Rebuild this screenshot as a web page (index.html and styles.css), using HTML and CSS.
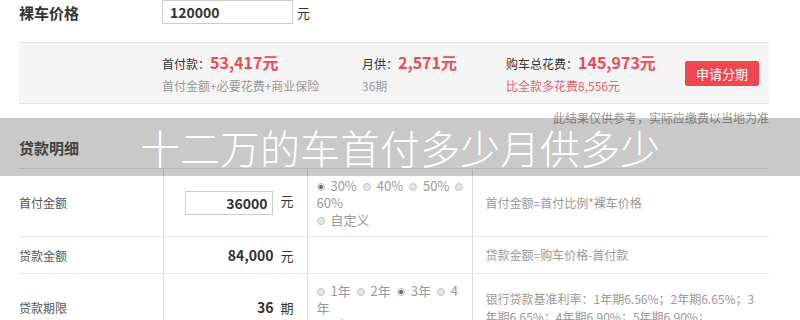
FILE: index.html
```html
<!DOCTYPE html>
<html>
    <head>
        <meta charset="utf-8" />
        <meta name="viewport" content="width=device-width, initial-scale=1" />
        <title>十二万的车首付多少月供多少</title>
        <link rel="stylesheet" href="styles.css">
    </head>
    <body>
        <div class="calc">
            <div class="price-row">
                <span class="price-label">裸车价格</span>
                <input class="price-input" type="text" value="120000" />
                <span class="unit">元</span>
            </div>

            <div class="summary">
                <div class="sum-item sum-item--down">
                    <p class="sum-main">首付款：<b>53,417元</b></p>
                    <p class="sum-sub">首付金额+必要花费+商业保险</p>
                </div>
                <div class="sum-item sum-item--month">
                    <p class="sum-main">月供：<b>2,571元</b></p>
                    <p class="sum-sub">36期</p>
                </div>
                <div class="sum-item sum-item--total">
                    <p class="sum-main">购车总花费：<b>145,973元</b></p>
                    <p class="sum-sub sum-sub--red">比全款多花费8,556元</p>
                </div>
                <a class="apply-btn" href="#">申请分期</a>
            </div>

            <p class="note">此结果仅供参考，实际应缴费以当地为准</p>

            <h3 class="detail-title">贷款明细</h3>
            <table class="detail">
                <tr class="row-down">
                    <td class="c-label">首付金额</td>
                    <td class="c-value"><input class="value-input" type="text" value="36000" /><span class="unit">元</span></td>
                    <td class="c-opts">
                        <label class="opt"><i class="radio radio--on"></i> 30%</label><label class="opt"><i class="radio"></i> 40%</label><label class="opt"><i class="radio"></i> 50%</label><label class="opt"><i class="radio"></i> 60%</label><br>
                        <label class="opt"><i class="radio"></i> 自定义</label>
                    </td>
                    <td class="c-desc">首付金额=首付比例*裸车价格</td>
                </tr>
                <tr class="row-loan">
                    <td class="c-label">贷款金额</td>
                    <td class="c-value"><b>84,000</b><span class="unit">元</span></td>
                    <td class="c-opts"></td>
                    <td class="c-desc">贷款金额=购车价格-首付款</td>
                </tr>
                <tr class="row-term">
                    <td class="c-label">贷款期限</td>
                    <td class="c-value"><b>36</b><span class="unit">期</span></td>
                    <td class="c-opts">
                        <label class="opt"><i class="radio"></i> 1年</label><label class="opt"><i class="radio"></i> 2年</label><label class="opt"><i class="radio radio--on"></i> 3年</label><label class="opt"><i class="radio"></i> 4年</label><br>
                        <label class="opt"><i class="radio"></i> 5年</label>
                    </td>
                    <td class="c-desc">银行贷款基准利率：1年期6.56%；2年期6.65%；3年期6.65%；4年期6.90%；5年期6.90%；</td>
                </tr>
            </table>
        </div>

        <div class="banner">十二万的车首付多少月供多少</div>
    </body>
</html>
```

FILE: styles.css
```css
*,*::before,*::after{
    box-sizing: border-box;
}
body{
    margin:0;
    padding:0;
    position: relative;
    font-family: "Noto Sans CJK SC", "Noto Sans", sans-serif;
    font-size:12px;
    color:#333;
    background:#fff;
    overflow:hidden;
    height:320px;
}
p{
    margin:0;
}
.calc{
    width:750px;
    margin-left:19px;
}

/* price */
.price-row{
    display:flex;
    align-items:center;
    height:24px;
}
.price-label{
    width:143px;
    font-size:15px;
    font-weight:bold;
    color:#333;
}
.price-input{
    width:131px;
    height:24px;
    border:1px solid #ccc;
    padding:0 7px;
    font-family:inherit;
    font-size:14px;
    font-weight:bold;
    color:#333;
    outline:none;
}
.price-row .unit{
    margin-left:4px;
    font-size:13px;
}

/* summary */
.summary{
    display:flex;
    align-items:center;
    height:62px;
    margin-top:18px;
    padding-left:143px;
    padding-right:10px;
    background:#f5f5f5;
    border-top:1px solid #e3e3e3;
    border-bottom:1px solid #e3e3e3;
}
.sum-item{
    display:flex;
    flex-direction:column;
    gap:1px;
}
.sum-item--down{ width:200px; }
.sum-item--month{ width:144px; }
.sum-item--total{ flex:1; }
.sum-main{
    line-height:22px;
    color:#333;
}
.sum-main b{
    font-size:16px;
    color:#ee4a55;
}
.sum-sub{
    line-height:20px;
    color:#999;
}
.sum-sub--red{
    color:#e8606a;
}
.apply-btn{
    display:block;
    width:74px;
    height:25px;
    line-height:25px;
    text-align:center;
    background:#f04650;
    color:#fff;
    font-size:13px;
    text-decoration:none;
    border-radius:2px;
}

.note{
    margin-top:5px;
    line-height:18px;
    text-align:right;
    color:#999;
}

/* detail table */
.detail-title{
    margin:0;
    height:42px;
    line-height:42px;
    font-size:15px;
    font-weight:bold;
    color:#555;
    border-bottom:1px solid #e3e3e3;
}
.detail{
    width:750px;
    border-collapse:collapse;
    table-layout:fixed;
}
.detail td{
    padding:8px 0;
    line-height:17px;
    vertical-align:middle;
    border-bottom:1px solid #e8e8e8;
}
.detail td + td{
    border-left:1px solid #ddd;
}
.row-loan td{
    padding-top:9px;
    padding-bottom:9px;
}
.c-label{
    width:144px;
    color:#555;
}
.c-value{
    width:144px;
    text-align:right;
    padding-right:13px !important;
    font-size:14px;
    color:#333;
}
.c-value .unit{
    margin-left:7px;
    font-size:13px;
}
.value-input{
    width:88px;
    height:24px;
    border:1px solid #ccc;
    padding:0 5px;
    text-align:right;
    font-family:inherit;
    font-size:14px;
    font-weight:bold;
    color:#333;
    outline:none;
    vertical-align:middle;
}
.c-opts{
    width:165px;
    padding-left:9px !important;
    padding-right:4px !important;
    font-size:13px;
    color:#999;
}
.c-desc{
    padding-left:13px !important;
    padding-right:6px !important;
    line-height:18px !important;
    color:#999;
}
.opt{
    margin-right:6px;
}
.radio{
    display:inline-block;
    width:8px;
    height:8px;
    margin-right:3px;
    border-radius:50%;
    border:1px solid #c2c2c2;
    background:#e6e6e6;
    vertical-align:0;
    position:relative;
}
.radio--on::after{
    content:"";
    position:absolute;
    left:1px;
    top:1px;
    width:4px;
    height:4px;
    border-radius:50%;
    background:#666;
}

/* banner over the page */
.banner{
    position:absolute;
    left:0;
    right:0;
    top:118px;
    height:58px;
    line-height:58px;
    text-align:center;
    font-size:40px;
    font-weight:300;
    color:#fff;
    background:rgba(0,0,0,0.21);
}
```
